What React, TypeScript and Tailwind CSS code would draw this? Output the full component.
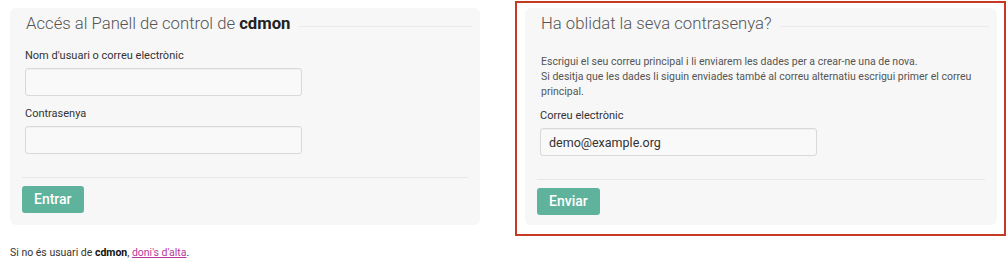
import { useState } from 'react'

const FONT = "font-['Roboto',_'Liberation_Sans',_sans-serif]"

function Title({ children }: { children: React.ReactNode }) {
  return (
    <div className="flex items-center h-6 pl-4 pr-2">
      <h2 className="text-[16.7px] font-light text-[#555] leading-6 whitespace-nowrap pr-2">{children}</h2>
      <div className="flex-1 h-px bg-[#ebebeb] mt-[4px]" />
    </div>
  )
}

function Field({ label, value, onChange, type = 'text', gap = 'mt-3' }: {
  label: string
  value: string
  onChange: (v: string) => void
  type?: string
  gap?: string
}) {
  return (
    <div className={`${gap} pl-[15px]`}>
      <label className="block text-[11px] leading-4 text-[#333]">{label}</label>
      <input
        type={type}
        value={value}
        onChange={(e) => onChange(e.target.value)}
        className="mt-1 block w-[277px] h-7 px-2 text-[12.5px] text-[#333] bg-[#f9f9f9] border border-[#d9d9d9] rounded-[3px] shadow-[inset_0_1px_1px_rgba(0,0,0,0.04)] focus:outline-none"
      />
    </div>
  )
}

function Footer({ label }: { label: string }) {
  return (
    <>
      <div className="mx-3 mt-[23px] h-px bg-[#e8e8e8]" />
      <div className="px-3 mt-2">
        <button className="h-[27px] px-3 rounded-[3px] bg-[#5fb39c] text-white text-[14px] font-medium">
          {label}
        </button>
      </div>
    </>
  )
}

export default function App() {
  const [user, setUser] = useState('')
  const [pass, setPass] = useState('')
  const [email, setEmail] = useState('demo@example.org')

  return (
    <div className={`${FONT} w-[1008px] h-[260px] bg-white`}>
      <div className="flex items-start pt-px">
        {/* Login */}
        <div className="ml-[10px] mt-[7px] w-[470px]">
          <div className="bg-[#f7f7f7] rounded-md h-[217px] pt-1">
            <Title>Accés al Panell de control de <b className="font-bold text-[#222]">cdmon</b></Title>
            <Field label="Nom d'usuari o correu electrònic" value={user} onChange={setUser} />
            <Field label="Contrasenya" value={pass} onChange={setPass} type="password" gap="mt-[10px]" />
            <Footer label="Entrar" />
          </div>
          <p className="mt-[20px] text-[10.5px] text-[#333]">
            Si no és usuari de <b className="font-bold text-[#111]">cdmon</b>,{' '}
            <a href="#" className="text-[#b8399a] underline">doni's d'alta</a>.
          </p>
        </div>

        {/* Password recovery */}
        <div className="ml-[35px] w-[491px] h-[235px] border-2 border-[#c63a24] pt-[5px] pl-2 pr-[7px]">
          <div className="bg-[#f7f7f7] rounded-md h-[217px] pt-[4px]">
            <Title>Ha oblidat la seva contrasenya?</Title>
            <p className="mt-[18px] px-4 text-[10.5px] leading-[15px] text-[#555]">
              Escrigui el seu correu principal i li enviarem les dades per a crear-ne una de nova.
              <br />
              Si desitja que les dades li siguin enviades també al correu alternatiu escrigui primer el correu principal.
            </p>
            <Field label="Correu electrònic" value={email} onChange={setEmail} gap="mt-[9px]" />
            <Footer label="Enviar" />
          </div>
        </div>
      </div>
    </div>
  )
}
